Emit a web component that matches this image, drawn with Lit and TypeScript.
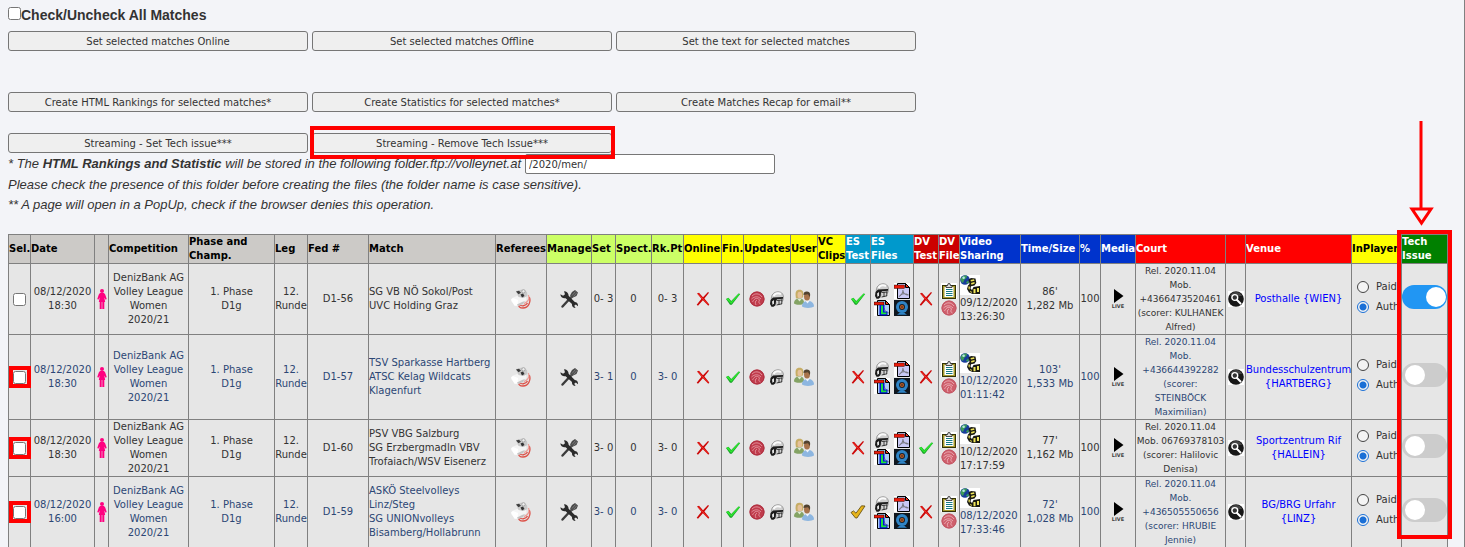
import { LitElement, html, svg, css, nothing, TemplateResult } from "lit";
import { customElement } from "lit/decorators.js";
import { classMap } from "lit/directives/class-map.js";

type Status = "yes" | "no" | "partial";

interface Match {
  id: string;
  date: string[];
  teams: string[];
  set: string;
  rank: string;
  esTest: Status;
  dvTest: Status;
  video: string[];
  size: string[];
  court: string[];
  venue: string[];
  marked: boolean;
  techIssue: boolean;
}

interface Column {
  label: string[];
  width: number;
  tone: string;
}

const COLUMNS: Column[] = [
  { label: ["Sel."], width: 22, tone: "plain" },
  { label: ["Date"], width: 64, tone: "plain" },
  { label: [""], width: 14, tone: "plain" },
  { label: ["Competition"], width: 80, tone: "plain" },
  { label: ["Phase and", "Champ."], width: 86, tone: "plain" },
  { label: ["Leg"], width: 33, tone: "plain" },
  { label: ["Fed #"], width: 61, tone: "plain" },
  { label: ["Match"], width: 127, tone: "plain" },
  { label: ["Referees"], width: 51, tone: "plain" },
  { label: ["Manage"], width: 45, tone: "lime" },
  { label: ["Set"], width: 24, tone: "lime" },
  { label: ["Spect."], width: 36, tone: "lime" },
  { label: ["Rk.Pt"], width: 32, tone: "lime" },
  { label: ["Online"], width: 38, tone: "yellow" },
  { label: ["Fin."], width: 22, tone: "yellow" },
  { label: ["Updates"], width: 47, tone: "yellow" },
  { label: ["User"], width: 27, tone: "yellow" },
  { label: ["VC", "Clips"], width: 28, tone: "yellow" },
  { label: ["ES", "Test"], width: 25, tone: "cyan" },
  { label: ["ES", "Files"], width: 43, tone: "cyan" },
  { label: ["DV", "Test"], width: 25, tone: "crimson" },
  { label: ["DV", "File"], width: 21, tone: "crimson" },
  { label: ["Video", "Sharing"], width: 61, tone: "blue" },
  { label: ["Time/Size"], width: 59, tone: "blue" },
  { label: ["%"], width: 21, tone: "blue" },
  { label: ["Media"], width: 35, tone: "blue" },
  { label: ["Court"], width: 90, tone: "red" },
  { label: [""], width: 20, tone: "red" },
  { label: ["Venue"], width: 106, tone: "red" },
  { label: ["InPlayer"], width: 50, tone: "yellow" },
  { label: ["Tech", "Issue"], width: 46, tone: "green" },
];

const MATCHES: Match[] = [
  {
    id: "D1-56",
    date: ["08/12/2020", "18:30"],
    teams: ["SG VB NÖ Sokol/Post", "UVC Holding Graz"],
    set: "0- 3",
    rank: "0- 3",
    esTest: "yes",
    dvTest: "no",
    video: ["09/12/2020", "13:26:30"],
    size: ["86'", "1,282 Mb"],
    court: ["Rel. 2020.11.04", "Mob.", "+4366473520461", "(scorer: KULHANEK", "Alfred)"],
    venue: ["Posthalle {WIEN}"],
    marked: false,
    techIssue: true,
  },
  {
    id: "D1-57",
    date: ["08/12/2020", "18:30"],
    teams: ["TSV Sparkasse Hartberg", "ATSC Kelag Wildcats", "Klagenfurt"],
    set: "3- 1",
    rank: "3- 0",
    esTest: "no",
    dvTest: "no",
    video: ["10/12/2020", "01:11:42"],
    size: ["103'", "1,533 Mb"],
    court: ["Rel. 2020.11.04", "Mob.", "+436644392282", "(scorer:", "STEINBÖCK", "Maximilian)"],
    venue: ["Bundesschulzentrum", "{HARTBERG}"],
    marked: true,
    techIssue: false,
  },
  {
    id: "D1-60",
    date: ["08/12/2020", "18:30"],
    teams: ["PSV VBG Salzburg", "SG Erzbergmadln VBV", "Trofaiach/WSV Eisenerz"],
    set: "3- 0",
    rank: "3- 0",
    esTest: "no",
    dvTest: "yes",
    video: ["10/12/2020", "17:17:59"],
    size: ["77'", "1,162 Mb"],
    court: ["Rel. 2020.11.04", "Mob. 06769378103", "(scorer: Halilovic", "Denisa)"],
    venue: ["Sportzentrum Rif", "{HALLEIN}"],
    marked: true,
    techIssue: false,
  },
  {
    id: "D1-59",
    date: ["08/12/2020", "16:00"],
    teams: ["ASKÖ Steelvolleys", "Linz/Steg", "SG UNIONvolleys", "Bisamberg/Hollabrunn"],
    set: "3- 0",
    rank: "3- 0",
    esTest: "partial",
    dvTest: "no",
    video: ["08/12/2020", "17:33:46"],
    size: ["72'", "1,028 Mb"],
    court: ["Rel. 2020.11.04", "Mob.", "+436505550656", "(scorer: HRUBIE", "Jennie)"],
    venue: ["BG/BRG Urfahr", "{LINZ}"],
    marked: true,
    techIssue: false,
  },
];

const lines = (parts: string[]) =>
  parts.map((part, i) => (i === 0 ? html`${part}` : html`<br />${part}`));

const icon = (w: number, h: number, body: TemplateResult<2>) =>
  html`<svg class="icon" width=${w} height=${h} viewBox="0 0 ${w} ${h}" aria-hidden="true">${body}</svg>`;

const woman = icon(10, 20, svg`
  <circle cx="5" cy="2" r="2" fill="#ff0080"/>
  <path d="M3 4h4l1.200 1.500 1.500 4.500-1 .8-1.400-2.400.9 4.600H1.800l.9-4.600-1.400 2.400-1-.8L1.800 5.500z" fill="#ff0080"/>
  <path d="M2.700 12.500h2v7.500h-2zM5.300 12.500h2v7.500h-2z" fill="#ff0080"/>`);

const whistle = icon(20, 20, svg`
  <path d="M18.300 8c2 5-1 11-6.300 11-3 0-5-1.500-4-4 2 3 7 2 8.500-1" fill="none" stroke="#dc5148" stroke-width="1.300"/>
  <path d="M17.500 6c1.500 4-1 7.500-4.500 8.500" fill="none" stroke="#ee9a93" stroke-width="1.100"/>
  <path d="M6 7l4 1 5-1 .5 4-4.500 3.500-4 2.500-3-.5L0 12l1-3z" fill="#f5f5f5"/>
  <path d="M0 10.500L2 9l5 2-.500 5.500-3 .2z" fill="#fff"/>
  <path d="M5 2l6-1.500 5 2.500.5 4-4 2-5-1z" fill="#c9c9c9"/>
  <path d="M5 2.500l3-.8 2 2-2.500 1.500z" fill="#3c3c3c"/>
  <path d="M9.500 5.500l2.500-1 1.500 2.500-2.500 1.500z" fill="#333"/>
  <path d="M6 15.500l5-2.500 3-1-2 3-5 2z" fill="#c4c4c4"/>
  <circle cx="12.500" cy="2.300" r="1.700" fill="#eee" stroke="#999" stroke-width=".8"/>`);

const tools = icon(18, 18, svg`
  <path d="M15.500 1.500l1.500 1.500-8 8.500-2-2z" fill="#555"/>
  <path d="M12 2l3-2L18 2.500 16.500 6l-4 1.800-2.500-2.300z" fill="#4a4a4a"/>
  <path d="M12 5.500l3.500-4M13.500 6.500L17 2.500" stroke="#999" stroke-width=".6"/>
  <path d="M8.500 10L2.500 16.500" stroke="#3c3c3c" stroke-width="2.400" stroke-linecap="round"/>
  <path d="M4 1.200A4.400 4.400 0 0 1 8.600 5.700l6.200 6.300c2 0 3.500 1.700 3.200 4.200l-2.200-1.700-1.600 1.300 1.400 2.200c-2.500 0-3.900-1.900-3.600-3.900L5.600 8.200C3.300 8.900.4 7.200.4 4.300l2.700 1.500 1.900-1.600z" fill="#2b2b2b"/>`);

const cross = icon(14, 14, svg`
  <path d="M1 1.500l2-.8 4 4.500L12 0l1 .8L8.400 6.600l4.900 5.900-1 1.200L6.900 8.200 2 13.800.7 12.700 5.400 6.800z" fill="#cc0808"/>
  <path d="M2 1.600l10 11" stroke="#ff3b30" stroke-width=".8"/>`);

const greenTick = icon(16, 14, svg`
  <path d="M1 7l2.500-1.300L6.200 9 13.500 1.500l1.700.6L6.800 12.700H5z" fill="#1ba52a"/>
  <path d="M1.300 6.900l2-.8L6 9.900 13.600 1.700l1.200.3L6.300 11.700z" fill="#2fec2f"/>`);

const goldTick = icon(16, 14, svg`
  <path d="M1 7.500l2.500-1.600L6 8.200 11.500.8 15 1 7 13H5.500z" fill="#e6b41c" stroke="#5a4508" stroke-width=".8"/>`);

const ballIcon = (fill: string, rim: string, seam: string) => icon(16, 16, svg`
  <circle cx="8" cy="8" r="7.500" fill=${fill}/>
  <circle cx="8" cy="8" r="7" fill="none" stroke=${rim}/>
  <path d="M3 5c3-3 7-3 10 1M2.500 8C6 5 9 5 12 8M3.500 11c2-4 5-5 7-2M8 9c-2 1-2 3-1 5M10.500 9c-1 2-1 3 1 4" fill="none" stroke=${seam} stroke-width=".8"/>`);

const ball = ballIcon("#c03c4c", "#ad2f40", "#e8a0a9");
const paleBall = ballIcon("#cf5f6c", "#c25765", "#efb9bf");

const helmet = icon(16, 16, svg`
  <path d="M2.500 9C1.500 4 5 .8 9 .8c4 0 6 3 5.300 6.700l-.8 3-8 2z" fill="#cfcfcf" stroke="#8a8a8a" stroke-width=".8"/>
  <path d="M4.500 5C6 2.500 9 1.800 12 3" fill="none" stroke="#fafafa" stroke-width="2"/>
  <path d="M1.500 9L4 6.500l10-.6v1.800l-6 .6-1 2-.5 4-2 1.500H2.500L1 13z" fill="#1b1b1b"/>
  <path d="M3 10.500l2-1.500v3.500l-1.500 1.500z" fill="#e4e4e4"/>
  <path d="M7.500 9l6-.5-.5 5-5 1.200z" fill="#d4d4d4"/>
  <path d="M7.500 9.500l6-.5M7.500 14l5.500-1.200M10 9v5M12.800 8.500v4.500" fill="none" stroke="#2a2a2a" stroke-width=".9"/>`);

const users = icon(20, 20, svg`
  <path d="M0 14.500C0 11 2 9.500 5.500 9.500S10 11 10 14.500c-2 1.800-8 1.800-10 0z" fill="#84a364"/>
  <path d="M2 9.500C.8 3 2 .8 5.500.8S10 3 9 8.500z" fill="#c7ad65"/>
  <ellipse cx="5.800" cy="6" rx="2.300" ry="3.200" fill="#e6c29b"/>
  <path d="M3.500 10l2 2.500 2-2.500z" fill="#dfead2"/>
  <path d="M8 17.500c0-4 2.500-5.500 6-5.500s6 2 6 5.500c-2 1.900-10 1.900-12 0z" fill="#8db6e0"/>
  <ellipse cx="13" cy="7.500" rx="3" ry="4" fill="#a8744c"/>
  <path d="M9.500 6c0-2.800 1.500-3.800 3.500-3.600 3 .2 3.800 2.600 2.800 5.600L14 5.200z" fill="#51422f"/>
  <path d="M11.500 12l2 2.500 2-2.500z" fill="#eef4fb"/>`);

const pdf = icon(16, 16, svg`
  <rect width="16" height="16" fill="#fff"/>
  <path d="M3.500.5h8l4 4v11h-12z" fill="#c9c9f5" stroke="#000"/>
  <path d="M11.500.5v4h4z" fill="#e32" stroke="#000"/>
  <rect x="0" y="2" width="10.500" height="3.500" fill="#e81c0c" stroke="#000" stroke-width=".4"/>
  <path d="M5 13.500c2-1 4-4 4-6.500M9 8c.5 3 3 4 5.500 4M6.500 12c2-1.500 5-1.500 8 0" fill="none" stroke="#77777f" stroke-width="1.100"/>`);

const listFile = icon(16, 16, svg`
  <rect width="16" height="16" fill="#fff"/>
  <path d="M3.500.5h8l4 4v11h-12z" fill="#a9cdf6" stroke="#000"/>
  <path d="M11.500.5v4h4z" fill="#e32" stroke="#000"/>
  <path d="M10 8c1 3 2 4 5 5" fill="none" stroke="#888"/>
  <rect x="0" y="2" width="10" height="3" fill="#e81c0c" stroke="#000" stroke-width=".5"/>
  <path d="M5.500 5h5v6.500h3v4h-8z" fill="#0011d8"/>
  <path d="M7 5.500h2v7h3.500v1.800H7z" fill="#1de03c"/>`);

const webcam = icon(16, 16, svg`
  <rect width="16" height="16" fill="#10171f"/>
  <circle cx="8" cy="7" r="6" fill="#2f84c6"/>
  <circle cx="8" cy="7" r="3" fill="#17222e"/>
  <circle cx="8" cy="7" r="2" fill="#c25d22"/>
  <circle cx="8" cy="7" r=".8" fill="#222"/>
  <path d="M3 14.800L6 12.500h4l3 2.300z" fill="#2f84c6"/>`);

const clipboard = icon(16, 16, svg`
  <rect width="16" height="16" fill="#fff"/>
  <rect x="1.500" y="2.500" width="13" height="13" fill="#a59a2c" stroke="#333208"/>
  <rect x="3.500" y="4" width="9" height="10" fill="#fff"/>
  <path d="M5 6.500h6.500M5 8.500h6.500M5 10.500h6.500M5 12.500h6.500" stroke="#167a84"/>
  <path d="M5 4.500v-2h1.500L7 .7h2l.5 1.800H11v2z" fill="#ddd" stroke="#222" stroke-width=".8"/>`);

const film = icon(20, 20, svg`
  <rect width="20" height="20" fill="#fff"/>
  <circle cx="5" cy="5" r="4.800" fill="#173c9c"/>
  <path d="M.8 3.500C2 .8 5 0 7 .8L6.500 3 4.500 4.500 3 8C1.500 7 .2 6 .8 3.500z" fill="#3b9a58"/>
  <path d="M6 7.500l2-2 1 1.500-1.500 2z" fill="#3b9a58"/>
  <circle cx="3.600" cy="2.800" r="1.300" fill="#b6e7e4"/>
  <path d="M8.500 4.500L11 3l4.500.5.8 4.500-1.800 2.500-3.500.8-.5 2.200 1.500 1.500 1.500-3 6.500-1V19h-7.500L9 17.500 7 14l1-3.500L9.500 9z" fill="#1a1a12"/>
  <path d="M10.500 5l3.500-.7.5 1.500-3.500.8zM11 8l3.500-1 .2 1.500-3.200 1.200zM8.500 11.200l1.500.5-.5 3-1-1zM10 16l1.500.5.500 1.500-1.500-.7zM13.500 14h2v4.200h-2zM17 13h2v4h-2z" fill="#efe55a"/>`);

const play = icon(12, 14, svg`<path d="M2 0l9.500 7L2 14z" fill="#000"/>`);

const magnifier = icon(16, 16, svg`
  <rect width="16" height="16" fill="#fff"/>
  <circle cx="8" cy="8" r="7.800" fill="#171717"/>
  <path d="M2 5a6.500 6.500 0 0 1 12 0z" fill="#444"/>
  <circle cx="6.800" cy="6.500" r="2.900" fill="#333" stroke="#fff" stroke-width="1.400"/>
  <path d="M9 9l3.500 3.500" stroke="#fff" stroke-width="2" stroke-linecap="round"/>`);

const statusIcon = (s: Status) => (s === "yes" ? greenTick : s === "no" ? cross : goldTick);

@customElement("app-root")
export class AppRoot extends LitElement {
  static styles = css`
    * {
      box-sizing: border-box;
    }
    :host {
      display: block;
      height: 100vh;
      overflow: hidden;
      padding: 0 16px 0 8px;
      border-right: 1px solid #808080;
      background: #f3f4f8;
      color: #333;
      font-family: "DejaVu Sans", Verdana, sans-serif;
      font-size: 10px;
      line-height: 14px;
    }
    .all {
      display: flex;
      align-items: center;
      padding-top: 5px;
      margin-bottom: 6px;
      font: bold 14px/20px "Liberation Sans", Arial, sans-serif;
    }
    .all input {
      width: 13px;
      height: 13px;
      margin: 0 0 3px;
      flex: none;
    }
    .actions {
      display: flex;
      gap: 4px;
    }
    .actions.first {
      margin-bottom: 41px;
    }
    .actions.second {
      margin-bottom: 21px;
    }
    .action {
      position: relative;
      flex: 0 1 300px;
    }
    .action button {
      display: block;
      width: 100%;
      height: 20px;
      padding: 1px 6px 0;
      border: 1px solid #767676;
      border-radius: 3px;
      background: #efefef;
      color: #333;
      font: inherit;
    }
    .action.marked::after {
      content: "";
      position: absolute;
      z-index: 1;
      inset: -7px -3px -6px -2px;
      border: 4px solid #f00;
      pointer-events: none;
    }
    .notes {
      padding-top: 1px;
      margin-bottom: 19px;
      font: italic 13px/20px "Liberation Sans", Arial, sans-serif;
    }
    .notes p {
      margin: 0;
    }
    .folder {
      display: flex;
      gap: 4px;
      align-items: center;
      margin-bottom: 1px;
    }
    .folder input {
      width: 250px;
      height: 20px;
      padding: 0 3px;
      border: 1px solid #767676;
      border-radius: 2px;
      background: #fff;
      color: #333;
      font: 10px "DejaVu Sans", Verdana, sans-serif;
    }
    .board {
      position: relative;
    }
    .tech-frame {
      position: absolute;
      top: -4px;
      right: -4px;
      bottom: 9px;
      width: 55px;
      border: 4px solid #f00;
      pointer-events: none;
    }
    .arrow {
      position: absolute;
      right: 14px;
      bottom: 100%;
      margin-bottom: 7px;
    }
    table {
      width: 100%;
      table-layout: fixed;
      border-collapse: collapse;
    }
    th,
    td {
      height: 29px;
      padding: 0;
      border: 1px solid #808080;
      white-space: nowrap;
      text-align: center;
      vertical-align: middle;
    }
    th {
      overflow: hidden;
      text-align: left;
      color: #000;
    }
    td {
      background: #e6e6e6;
    }
    .alt {
      color: #2c4775;
    }
    .plain {
      background: #cccac7;
    }
    .lime {
      background: #cf6;
    }
    .yellow {
      background: #ff0;
    }
    .cyan {
      background: #09c;
      color: #fff;
    }
    .crimson {
      background: #c00;
      color: #fff;
    }
    .blue {
      background: #03c;
      color: #fff;
    }
    .red {
      background: #f00;
      color: #fff;
    }
    .green {
      background: #008000;
      color: #fff;
    }
    .left {
      text-align: left;
    }
    .court {
      font-size: 9px;
    }
    .icon {
      display: block;
      margin: 0 auto;
    }
    .pick {
      position: relative;
      display: block;
      width: 13px;
      margin: 0 auto;
    }
    .pick input {
      display: block;
      width: 13px;
      height: 13px;
      margin: 0;
    }
    .pick.marked::after {
      content: "";
      position: absolute;
      inset: -5px -5px -4px -4px;
      border: 4px solid #f00;
      pointer-events: none;
    }
    .pair {
      display: flex;
      justify-content: center;
      gap: 4px;
    }
    .pair .icon {
      margin: 0;
    }
    .files {
      display: grid;
      grid-template-columns: 16px 16px;
      justify-content: center;
      gap: 1px 4px;
    }
    .stack {
      display: grid;
      gap: 1px;
    }
    .video .icon {
      margin: 0 0 1px;
    }
    .live {
      display: block;
      font-size: 5px;
      font-weight: bold;
      line-height: 7px;
      color: #444;
    }
    a {
      color: #00f;
      text-decoration: none;
    }
    .player {
      padding: 0 0 4px 5px;
      overflow: hidden;
    }
    .player label {
      display: flex;
      align-items: center;
      gap: 7px;
      height: 20px;
      color: #333;
    }
    .player input {
      appearance: none;
      flex: none;
      width: 12px;
      height: 12px;
      margin: 0;
      border: 1px solid #444;
      border-radius: 50%;
      background: #f4f4f4;
    }
    .player input:checked {
      border-color: #1a6fd6;
      background: radial-gradient(circle, #1a6fd6 0 3px, #f4f4f4 4px);
    }
    .switch {
      appearance: none;
      display: block;
      width: 45px;
      height: 24px;
      margin: 0 0 4px;
      padding: 2px 3px;
      border-radius: 12px;
      background: #ccc;
    }
    .switch::before {
      content: "";
      display: block;
      width: 20px;
      height: 20px;
      border-radius: 50%;
      background: #fff;
    }
    .switch:checked {
      padding-left: 24px;
      background: #2196f3;
    }
  `;

  private row(m: Match, i: number) {
    return html`<tr class=${classMap({ alt: i % 2 === 1 })}>
      <td>
        <span class=${classMap({ pick: true, marked: m.marked })}>
          <input type="checkbox" aria-label="Select ${m.id}" />
        </span>
      </td>
      <td>${lines(m.date)}</td>
      <td>${woman}</td>
      <td>${lines(["DenizBank AG", "Volley League", "Women", "2020/21"])}</td>
      <td>${lines(["1. Phase", "D1g"])}</td>
      <td>${lines(["12.", "Runde"])}</td>
      <td>${m.id}</td>
      <td class="left">${lines(m.teams)}</td>
      <td>${whistle}</td>
      <td>${tools}</td>
      <td>${m.set}</td>
      <td>0</td>
      <td>${m.rank}</td>
      <td>${cross}</td>
      <td>${greenTick}</td>
      <td><div class="pair">${ball}${helmet}</div></td>
      <td>${users}</td>
      <td></td>
      <td>${statusIcon(m.esTest)}</td>
      <td><div class="files">${helmet}${pdf}${listFile}${webcam}</div></td>
      <td>${statusIcon(m.dvTest)}</td>
      <td><div class="stack">${clipboard}${paleBall}</div></td>
      <td class="left video">${film}${lines(m.video)}</td>
      <td>${lines(m.size)}</td>
      <td>100</td>
      <td>${play}<span class="live">LIVE</span></td>
      <td class="court">${lines(m.court)}</td>
      <td>${magnifier}</td>
      <td><a href="#venue">${lines(m.venue)}</a></td>
      <td class="player">
        <label><input type="radio" name="player-${m.id}" />Paid</label>
        <label><input type="radio" name="player-${m.id}" checked />Auth</label>
      </td>
      <td>
        <input class="switch" type="checkbox" role="switch" aria-label="Tech issue ${m.id}" ?checked=${m.techIssue} />
      </td>
    </tr>`;
  }

  private action(label: string, marked = false) {
    return html`<div class=${classMap({ action: true, marked })}><button type="button">${label}</button></div>`;
  }

  render() {
    return html`
      <div class="all">
        <input id="all" type="checkbox" /><label for="all">Check/Uncheck All Matches</label>
      </div>
      <div class="actions first">
        ${this.action("Set selected matches Online")}
        ${this.action("Set selected matches Offline")}
        ${this.action("Set the text for selected matches")}
      </div>
      <div class="actions second">
        ${this.action("Create HTML Rankings for selected matches*")}
        ${this.action("Create Statistics for selected matches*")}
        ${this.action("Create Matches Recap for email**")}
      </div>
      <div class="actions">
        ${this.action("Streaming - Set Tech issue***")}
        ${this.action("Streaming - Remove Tech Issue***", true)}
      </div>
      <div class="notes">
        <div class="folder">
          <label for="folder">* The <b>HTML Rankings and Statistic</b> will be stored in the following folder.ftp://volleynet.at</label>
          <input id="folder" type="text" value="/2020/men/" />
        </div>
        <p>Please check the presence of this folder before creating the files (the folder name is case sensitive).</p>
        <p>** A page will open in a PopUp, check if the browser denies this operation.</p>
      </div>
      <div class="board">
        <table>
          <colgroup>
            ${COLUMNS.map((c) => html`<col style="width:${c.width}px" />`)}
          </colgroup>
          <thead>
            <tr>
              ${COLUMNS.map((c) => html`<th class=${c.tone} scope="col">${c.label[0] ? lines(c.label) : nothing}</th>`)}
            </tr>
          </thead>
          <tbody>
            ${MATCHES.map((m, i) => this.row(m, i))}
          </tbody>
        </table>
        <div class="tech-frame"></div>
        <svg class="arrow" width="26" height="106" viewBox="0 0 26 106" aria-hidden="true">
          <path d="M13 0v87" stroke="#f00" stroke-width="3" />
          <path d="M4 88h19l-9.500 14z" fill="#f3f4f8" stroke="#f00" stroke-width="3" />
        </svg>
      </div>
    `;
  }
}
